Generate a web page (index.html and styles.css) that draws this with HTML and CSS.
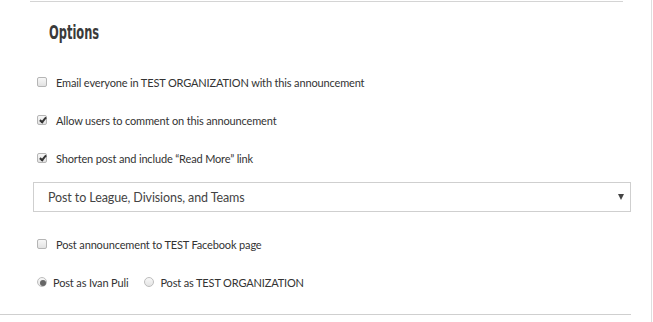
FILE: index.html
```html
<!DOCTYPE html>
<html lang="en">
<head>
    <meta charset="UTF-8">
    <title>Announcement Options</title>
    <link rel="stylesheet" href="styles.css">
</head>
<body>
    <div class="page">
        <div class="options">
            <h2 class="options-title"><span>Options</span></h2>

            <label class="opt">
                <input type="checkbox" class="box">
                <span>Email everyone in TEST ORGANIZATION with this announcement</span>
            </label>
            <label class="opt">
                <input type="checkbox" class="box" checked>
                <span>Allow users to comment on this announcement</span>
            </label>
            <label class="opt">
                <input type="checkbox" class="box" checked>
                <span>Shorten post and include &ldquo;Read More&rdquo; link</span>
            </label>
        </div>

        <div class="select">
            <span>Post to League, Divisions, and Teams</span>
            <span class="arrow"></span>
        </div>

        <div class="options options-lower">
            <label class="opt">
                <input type="checkbox" class="box">
                <span>Post announcement to TEST Facebook page</span>
            </label>
            <div class="opt">
                <label class="radio-item">
                    <input type="radio" name="author" class="radio" checked>
                    <span>Post as Ivan Puli</span>
                </label>
                <label class="radio-item">
                    <input type="radio" name="author" class="radio">
                    <span>Post as TEST ORGANIZATION</span>
                </label>
            </div>
        </div>

        <div class="divider"></div>
    </div>
</body>
</html>
```

FILE: styles.css
```css
body {
    margin: 0;
    background-color: #fff;
    font-family: Lato, "Open Sans", sans-serif;
    color: #333;
}
.page {
    width: 651px;
    height: 322px;
    border-right: 1px solid #dedede;
    overflow: hidden;
}
.options {
    margin: 1px 28px 0 30px;
    border-top: 1px solid #d4d4d4;
}
.options-lower {
    border-top: none;
    margin-top: 13px;
}
.options-title {
    margin: 0;
    padding: 19px 0 20px 19px;
    font-family: "DejaVu Sans Condensed", "DejaVu Sans", sans-serif;
    font-size: 19px;
    line-height: 22px;
    font-weight: bold;
    color: #3a3a3a;
}
.options-title span {
    display: inline-block;
    transform: scaleX(0.67);
    transform-origin: left center;
}
.opt {
    display: flex;
    align-items: center;
    height: 38px;
    padding-left: 7px;
    font-size: 11px;
    letter-spacing: -0.15px;
}
.box {
    appearance: none;
    -webkit-appearance: none;
    position: relative;
    width: 10px;
    height: 10px;
    margin: 0 9px 0 0;
    border: 1px solid #b5b5b5;
    border-radius: 2px;
    background: linear-gradient(#f7f7f7, #e2e2e2);
}
.box:checked::after {
    content: "";
    position: absolute;
    left: 3px;
    top: 0px;
    width: 2px;
    height: 5px;
    border: solid #333;
    border-width: 0 2px 2px 0;
    transform: rotate(40deg);
}
.radio-item {
    display: flex;
    align-items: center;
    margin-right: 16px;
}
.radio {
    appearance: none;
    -webkit-appearance: none;
    position: relative;
    width: 10px;
    height: 10px;
    margin: 0 6px 0 0;
    border: 1px solid #bdbdbd;
    border-radius: 50%;
    background: linear-gradient(#f8f8f8, #e4e4e4);
}
.radio:checked::after {
    content: "";
    position: absolute;
    left: 2px;
    top: 2px;
    width: 6px;
    height: 6px;
    border-radius: 50%;
    background-color: #666;
}
.select {
    display: flex;
    justify-content: space-between;
    align-items: center;
    box-sizing: border-box;
    width: 598px;
    height: 30px;
    margin: 5px 0 0 33px;
    padding: 0 6px 0 14px;
    border: 1px solid #cfcfcf;
    font-size: 12.5px;
    letter-spacing: -0.1px;
    color: #444;
}
.arrow {
    width: 0;
    height: 0;
    border-left: 3.5px solid transparent;
    border-right: 3.5px solid transparent;
    border-top: 6px solid #444;
}
.divider {
    width: 631px;
    margin-top: 13px;
    border-top: 1px solid #cfcfcf;
}
```
